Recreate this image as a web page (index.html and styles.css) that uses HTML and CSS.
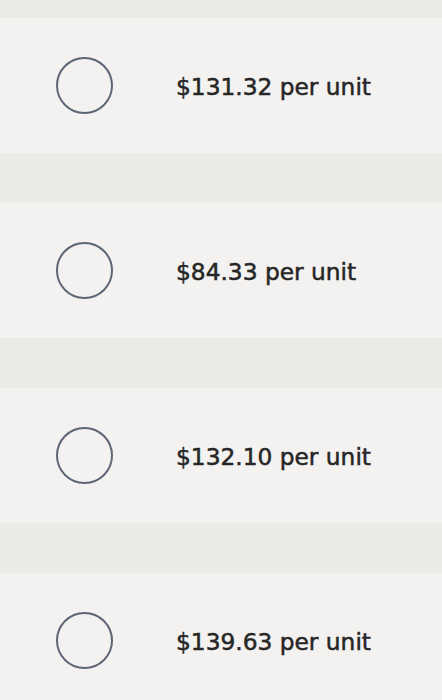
FILE: index.html
```html
<!DOCTYPE html>
<html lang="en">
<head>
<meta charset="utf-8">
<title>Answer options</title>
<link rel="stylesheet" href="styles.css">
</head>
<body>
<ul class="options">
  <li class="option"><span class="radio"></span><span class="label">$131.32 per unit</span></li>
  <li class="option"><span class="radio"></span><span class="label">$84.33 per unit</span></li>
  <li class="option"><span class="radio"></span><span class="label">$132.10 per unit</span></li>
  <li class="option"><span class="radio"></span><span class="label">$139.63 per unit</span></li>
</ul>
</body>
</html>
```
FILE: styles.css
```css
html, body {
  margin: 0;
  padding: 0;
  background: #ebeae7;
}
body {
  width: 442px;
  height: 700px;
  overflow: hidden;
  font-family: "DejaVu Sans", "Liberation Sans", sans-serif;
}
.options {
  list-style: none;
  margin: 0;
  padding: 18px 0 0 0;
  display: flex;
  flex-direction: column;
  gap: 50px;
}
.option {
  height: 135px;
  background: #f3f2f0;
  display: flex;
  align-items: center;
  padding-left: 56px;
  gap: 63px;
}
.radio {
  width: 53px;
  height: 53px;
  border: 2.5px solid #5d6674;
  border-radius: 50%;
  flex: none;
}
.label {
  font-size: 23.3px;
  font-weight: 400;
  color: #262626;
  -webkit-text-stroke: 0.5px #262626;
  letter-spacing: 0;
  margin-top: 2px;
}
```
